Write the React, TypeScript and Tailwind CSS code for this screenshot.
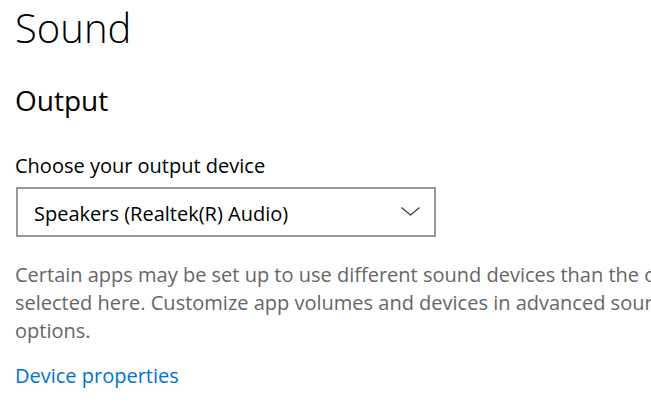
import React from "react";

export default function App() {
  const font = { fontFamily: '"Open Sans", "Noto Sans", sans-serif' };
  return (
    <div className="w-[651px] h-[411px] overflow-hidden bg-white" style={font}>
      <div className="pl-[15px]">
        <h1 className="text-[40px] font-light leading-[56px] text-black whitespace-nowrap">Sound</h1>
        <h2 className="mt-[26px] text-[28px] font-normal leading-[36px] text-black whitespace-nowrap">Output</h2>
        <div className="mt-[35px] text-[20px] leading-[26px] text-black whitespace-nowrap">Choose your output device</div>
        <div className="mt-[8px] ml-px w-[420px] h-[50px] border-2 border-[#999999] flex items-center justify-between pl-[16px] pr-[14px]">
          <span className="mt-[3px] text-[20px] leading-[26px] text-black whitespace-nowrap">Speakers (Realtek(R) Audio)</span>
          <svg width="19" height="9" viewBox="0 0 19 9" className="mb-[2px]">
            <polyline points="0.5,0.5 9.5,8 18.5,0.5" fill="none" stroke="#333" strokeWidth="1.1" />
          </svg>
        </div>
        <p className="mt-[24px] text-[20px] leading-[28px] text-[#666666] whitespace-nowrap">
          Certain apps may be set up to use different sound devices than the one
          <br />
          selected here. Customize app volumes and devices in advanced sound
          <br />
          options.
        </p>
        <a className="block mt-[18px] text-[20px] leading-[26px] text-[#0073cf] whitespace-nowrap cursor-pointer">Device properties</a>
      </div>
    </div>
  );
}
